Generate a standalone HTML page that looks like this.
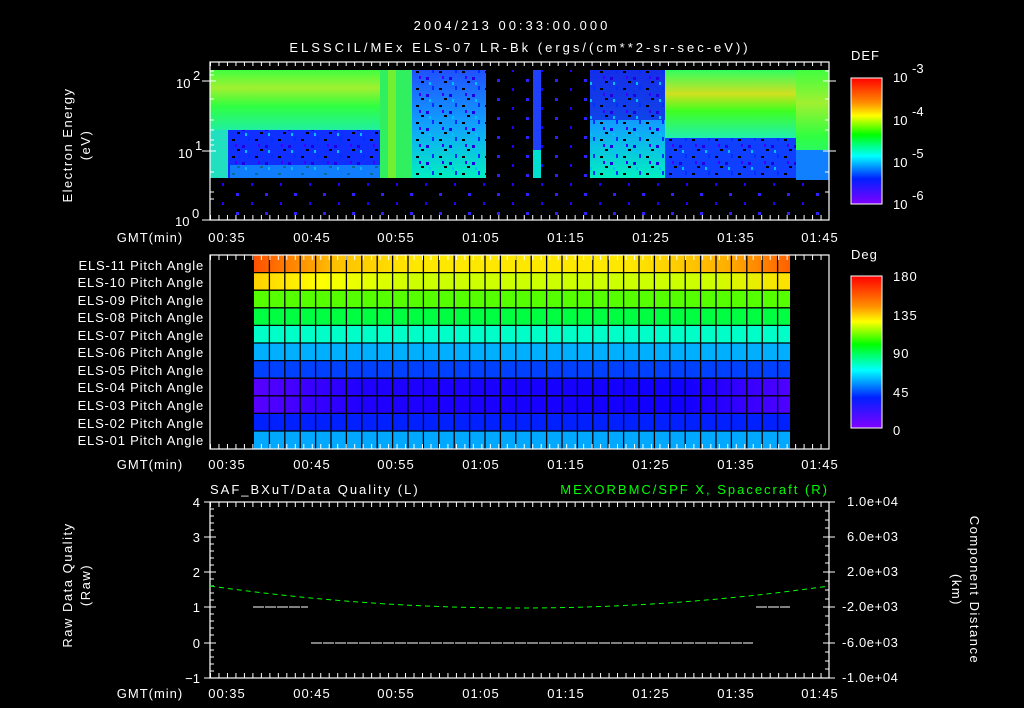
<!DOCTYPE html>
<html><head><meta charset="utf-8"><style>
html,body{margin:0;padding:0;background:#000;width:1024px;height:708px;overflow:hidden}
svg{display:block}
text{font-family:"Liberation Sans",sans-serif;fill:#fff;font-size:13px}
</style></head><body>
<svg width="1024" height="708" viewBox="0 0 1024 708" xmlns="http://www.w3.org/2000/svg">
<defs>
<linearGradient id="cb" x1="0" y1="0" x2="0" y2="1">
<stop offset="0" stop-color="#ff0000"/><stop offset="0.2" stop-color="#ff9000"/><stop offset="0.3" stop-color="#ffff00"/>
<stop offset="0.45" stop-color="#00ff00"/><stop offset="0.62" stop-color="#00ffff"/><stop offset="0.8" stop-color="#0020ff"/>
<stop offset="1" stop-color="#8000ff"/></linearGradient>
<linearGradient id="gy" x1="0" y1="0" x2="0" y2="1">
<stop offset="0" stop-color="#40ff40"/><stop offset="0.3" stop-color="#a0f030"/><stop offset="0.6" stop-color="#30ff40"/><stop offset="1" stop-color="#20f0a0"/></linearGradient>
<linearGradient id="gy2" x1="0" y1="0" x2="0" y2="1">
<stop offset="0" stop-color="#30ff60"/><stop offset="0.35" stop-color="#d0e020"/><stop offset="0.6" stop-color="#40ff20"/><stop offset="1" stop-color="#20f0b0"/></linearGradient>
<linearGradient id="bl" x1="0" y1="0" x2="0" y2="1">
<stop offset="0" stop-color="#2050ff"/><stop offset="0.5" stop-color="#10a0ff"/><stop offset="1" stop-color="#00f0c0"/></linearGradient>
<linearGradient id="row1" x1="0" y1="0" x2="1" y2="0">
<stop offset="0" stop-color="#ff5000"/><stop offset="0.15" stop-color="#ffc000"/><stop offset="0.3" stop-color="#ffe800"/><stop offset="0.7" stop-color="#ffe800"/><stop offset="0.88" stop-color="#ffb000"/><stop offset="1" stop-color="#ff6000"/></linearGradient>
<linearGradient id="row2" x1="0" y1="0" x2="1" y2="0">
<stop offset="0" stop-color="#ffd000"/><stop offset="0.12" stop-color="#ffff00"/><stop offset="0.3" stop-color="#ccff00"/><stop offset="0.85" stop-color="#ccff00"/><stop offset="1" stop-color="#ffe000"/></linearGradient>
<linearGradient id="rowp" x1="0" y1="0" x2="1" y2="0">
<stop offset="0" stop-color="#5800ff"/><stop offset="0.2" stop-color="#2000ff"/><stop offset="0.8" stop-color="#1000ff"/><stop offset="1" stop-color="#5000ff"/></linearGradient>
<pattern id="noise" width="23" height="17" patternUnits="userSpaceOnUse">
<rect x="2" y="3" width="3" height="2" fill="#000"/><rect x="12" y="9" width="3" height="3" fill="#2000e0"/><rect x="18" y="1" width="2" height="4" fill="#0030ff"/><rect x="7" y="13" width="3" height="2" fill="#000"/><rect x="15" y="14" width="2" height="3" fill="#00c0ff"/><rect x="5" y="8" width="2" height="3" fill="#4000ff"/></pattern>
<pattern id="dots" width="29" height="19" patternUnits="userSpaceOnUse">
<rect x="4" y="3" width="3" height="3" fill="#3020ff"/><rect x="19" y="12" width="2" height="3" fill="#2000ff"/></pattern>
<pattern id="txs" x="210" y="0" width="8.48" height="10" patternUnits="userSpaceOnUse"><rect x="0" y="0" width="1" height="10" fill="#fff"/></pattern>
</defs>

<!-- titles -->
<text x="512" y="30" text-anchor="middle" font-size="16" letter-spacing="3">2004/213 00:33:00.000</text>
<text x="520" y="52" text-anchor="middle" font-size="16" letter-spacing="3">ELSSCIL/MEx ELS-07 LR-Bk  (ergs/(cm**2-sr-sec-eV))</text>

<!-- PANEL 1 spectrogram -->
<rect x="210" y="70" width="170" height="60" fill="url(#gy)"/>
<rect x="210" y="130" width="170" height="48" fill="#1030ff"/>
<rect x="210" y="130" width="170" height="48" fill="url(#noise)"/>
<rect x="210" y="130" width="18" height="48" fill="#20e0c0"/>
<rect x="230" y="165" width="150" height="13" fill="#10b0ff" opacity="0.6"/>
<rect x="380" y="70" width="32" height="108" fill="#30f060"/>
<rect x="388" y="70" width="8" height="108" fill="#70f030"/>
<rect x="412" y="70" width="74" height="108" fill="url(#bl)"/>
<rect x="412" y="70" width="74" height="108" fill="url(#noise)"/>
<rect x="486" y="70" width="48" height="150" fill="url(#dots)"/>
<rect x="533" y="70" width="8" height="108" fill="#2040ff"/>
<rect x="533" y="150" width="8" height="28" fill="#00e0d0"/>
<rect x="541" y="70" width="49" height="150" fill="url(#dots)"/>
<rect x="590" y="70" width="75" height="108" fill="url(#bl)"/>
<rect x="590" y="70" width="75" height="50" fill="#1020e0" opacity="0.7"/>
<rect x="590" y="70" width="75" height="108" fill="url(#noise)"/>
<rect x="665" y="70" width="131" height="68" fill="url(#gy2)"/>
<rect x="665" y="138" width="131" height="40" fill="#1040ff"/>
<rect x="665" y="138" width="131" height="40" fill="url(#noise)"/>
<rect x="796" y="70" width="33" height="110" fill="url(#gy)"/>
<rect x="796" y="150" width="33" height="30" fill="#1080ff"/>
<rect x="210" y="178" width="619" height="42" fill="url(#dots)"/>
<!-- axes p1 -->
<rect x="210" y="62" width="619" height="158" fill="none" stroke="#fff" stroke-width="1.2"/>
<rect x="210" y="62" width="619" height="4" fill="url(#txs)"/>
<rect x="210" y="215" width="619" height="5" fill="url(#txs)"/>
<g stroke="#fff" stroke-width="1">
<path d="M202 81H216M202 151H216M202 220H216M823 81H836M823 151H836"/>
<path d="M210 71H214M210 75H214M210 99H214M210 120H214M210 130H214M210 140H214M210 145H214M210 172H214M210 192H214M210 199H214M825 71H829M825 99H829M825 120H829M825 130H829M825 172H829M825 192H829"/>
</g>
<text x="176" y="88" font-size="15">10</text><text x="193" y="80" font-size="10">2</text>
<text x="178" y="158" font-size="15">10</text><text x="195" y="150" font-size="10">1</text>
<text x="175" y="226" font-size="15">10</text><text x="192" y="218" font-size="10">0</text>
<text transform="translate(72,145) rotate(-90)" text-anchor="middle" font-size="15" letter-spacing="1.5">Electron Energy</text>
<text transform="translate(90,145) rotate(-90)" text-anchor="middle" font-size="15" letter-spacing="1.5">(eV)</text>
<g font-size="14" text-anchor="middle" letter-spacing="1">
<text x="150" y="242">GMT(min)</text><text x="227" y="242">00:35</text><text x="312" y="242">00:45</text><text x="396" y="242">00:55</text><text x="481" y="242">01:05</text><text x="566" y="242">01:15</text><text x="651" y="242">01:25</text><text x="736" y="242">01:35</text><text x="820" y="242">01:45</text>
</g>

<!-- DEF colorbar -->
<text x="851" y="60" font-size="16" letter-spacing="1">DEF</text>
<rect x="851" y="78" width="31" height="126" fill="url(#cb)" stroke="#fff" stroke-width="1"/>
<text x="893" y="82" font-size="16">10</text><text x="912" y="73" font-size="11">-3</text>
<text x="893" y="125" font-size="16">10</text><text x="912" y="116" font-size="11">-4</text>
<text x="893" y="167" font-size="16">10</text><text x="912" y="158" font-size="11">-5</text>
<text x="893" y="209" font-size="16">10</text><text x="912" y="200" font-size="11">-6</text>

<!-- PANEL 2 -->
<g>
<rect x="254" y="255" width="536" height="17.6" fill="url(#row1)"/>
<rect x="254" y="272.6" width="536" height="17.6" fill="url(#row2)"/>
<rect x="254" y="290.2" width="536" height="17.6" fill="#55ff00"/>
<rect x="254" y="307.8" width="536" height="17.6" fill="#00ff40"/>
<rect x="254" y="325.4" width="536" height="17.6" fill="#00ffc8"/>
<rect x="254" y="343" width="536" height="17.6" fill="#00b0ff"/>
<rect x="254" y="360.6" width="536" height="17.6" fill="#0040ff"/>
<rect x="254" y="378.2" width="536" height="17.6" fill="url(#rowp)"/>
<rect x="254" y="395.8" width="536" height="17.6" fill="url(#rowp)"/>
<rect x="254" y="413.4" width="536" height="17.6" fill="#0020ff"/>
<rect x="254" y="431" width="536" height="18" fill="#00a8ff"/>
</g>
<g stroke="#000" stroke-width="1.3">
<path d="M254 272.6H790M254 290.2H790M254 307.8H790M254 325.4H790M254 343H790M254 360.6H790M254 378.2H790M254 395.8H790M254 413.4H790M254 431H790"/>
<path d="M269.4 255V449M284.8 255V449M300.2 255V449M315.6 255V449M331 255V449M346.4 255V449M361.8 255V449M377.2 255V449M392.6 255V449M408 255V449M423.4 255V449M438.8 255V449M454.2 255V449M469.6 255V449M485 255V449M500.4 255V449M515.8 255V449M531.2 255V449M546.6 255V449M562 255V449M577.4 255V449M592.8 255V449M608.2 255V449M623.6 255V449M639 255V449M654.4 255V449M669.8 255V449M685.2 255V449M700.6 255V449M716 255V449M731.4 255V449M746.8 255V449M762.2 255V449M777.6 255V449"/>
</g>
<rect x="210" y="255" width="619" height="194" fill="none" stroke="#fff" stroke-width="1.2"/>
<rect x="210" y="255" width="619" height="5" fill="url(#txs)"/>
<rect x="210" y="444" width="619" height="5" fill="url(#txs)"/>
<g font-size="13.5" text-anchor="end" letter-spacing="0.8">
<text x="204" y="270">ELS-11 Pitch Angle</text><text x="204" y="287">ELS-10 Pitch Angle</text><text x="204" y="305">ELS-09 Pitch Angle</text><text x="204" y="322">ELS-08 Pitch Angle</text><text x="204" y="340">ELS-07 Pitch Angle</text><text x="204" y="357">ELS-06 Pitch Angle</text><text x="204" y="375">ELS-05 Pitch Angle</text><text x="204" y="392">ELS-04 Pitch Angle</text><text x="204" y="410">ELS-03 Pitch Angle</text><text x="204" y="428">ELS-02 Pitch Angle</text><text x="204" y="445">ELS-01 Pitch Angle</text>
</g>
<g font-size="14" text-anchor="middle" letter-spacing="1">
<text x="150" y="469">GMT(min)</text><text x="227" y="469">00:35</text><text x="312" y="469">00:45</text><text x="396" y="469">00:55</text><text x="481" y="469">01:05</text><text x="566" y="469">01:15</text><text x="651" y="469">01:25</text><text x="736" y="469">01:35</text><text x="820" y="469">01:45</text>
</g>
<!-- Deg colorbar -->
<text x="851" y="259" font-size="16" letter-spacing="1">Deg</text>
<rect x="851" y="276" width="31" height="152" fill="url(#cb)" stroke="#fff" stroke-width="1"/>
<g font-size="16" letter-spacing="1"><text x="893" y="281">180</text><text x="893" y="320">135</text><text x="893" y="358">90</text><text x="893" y="397">45</text><text x="893" y="435">0</text></g>

<!-- PANEL 3 -->
<text x="210" y="494" font-size="16" letter-spacing="2">SAF_BXuT/Data Quality (L)</text>
<text x="829" y="494" font-size="16" letter-spacing="2" text-anchor="end" style="fill:#00ff00">MEXORBMC/SPF X, Spacecraft (R)</text>
<rect x="210" y="502" width="619" height="176" fill="none" stroke="#fff" stroke-width="1.2"/>
<rect x="210" y="502" width="619" height="5" fill="url(#txs)"/>
<rect x="210" y="673" width="619" height="5" fill="url(#txs)"/>
<g stroke="#fff" stroke-width="1">
<path d="M204 502H216M204 537H216M204 572H216M204 607H216M204 643H216M204 678H216M210 509H214M210 516H214M210 523H214M210 530H214M210 544H214M210 551H214M210 558H214M210 565H214M210 579H214M210 586H214M210 593H214M210 600H214M210 614H214M210 621H214M210 628H214M210 635H214M210 650H214M210 657H214M210 664H214M210 671H214"/>
<path d="M823 502H835M823 537H835M823 572H835M823 607H835M823 643H835M823 678H835M825 511H829M825 520H829M825 528H829M825 546H829M825 555H829M825 563H829M825 581H829M825 590H829M825 599H829M825 616H829M825 625H829M825 634H829M825 652H829M825 661H829M825 669H829"/>
<path d="M253 607H308M311 643H753M756 607H790" stroke-dasharray="11 1"/>
</g>
<path d="M210 586 Q520 630 829 586" fill="none" stroke="#00ff00" stroke-width="1" stroke-dasharray="5 4"/>
<g font-size="15" text-anchor="end"><text x="200" y="507">4</text><text x="200" y="542">3</text><text x="200" y="577">2</text><text x="200" y="612">1</text><text x="200" y="648">0</text><text x="200" y="683">−1</text></g>
<g font-size="13" letter-spacing="0.6"><text x="847" y="506">1.0e+04</text><text x="847" y="541">6.0e+03</text><text x="847" y="576">2.0e+03</text><text x="842" y="611">-2.0e+03</text><text x="842" y="647">-6.0e+03</text><text x="842" y="682">-1.0e+04</text></g>
<text transform="translate(72,585) rotate(-90)" text-anchor="middle" font-size="15" letter-spacing="1.5">Raw Data Quality</text>
<text transform="translate(90,585) rotate(-90)" text-anchor="middle" font-size="15" letter-spacing="1.5">(Raw)</text>
<text transform="translate(970,590) rotate(90)" text-anchor="middle" font-size="15" letter-spacing="1.5">Component Distance</text>
<text transform="translate(952,590) rotate(90)" text-anchor="middle" font-size="15" letter-spacing="1.5">(km)</text>
<g font-size="14" text-anchor="middle" letter-spacing="1">
<text x="150" y="698">GMT(min)</text><text x="227" y="698">00:35</text><text x="312" y="698">00:45</text><text x="396" y="698">00:55</text><text x="481" y="698">01:05</text><text x="566" y="698">01:15</text><text x="651" y="698">01:25</text><text x="736" y="698">01:35</text><text x="820" y="698">01:45</text>
</g>
</svg>
</body></html>
